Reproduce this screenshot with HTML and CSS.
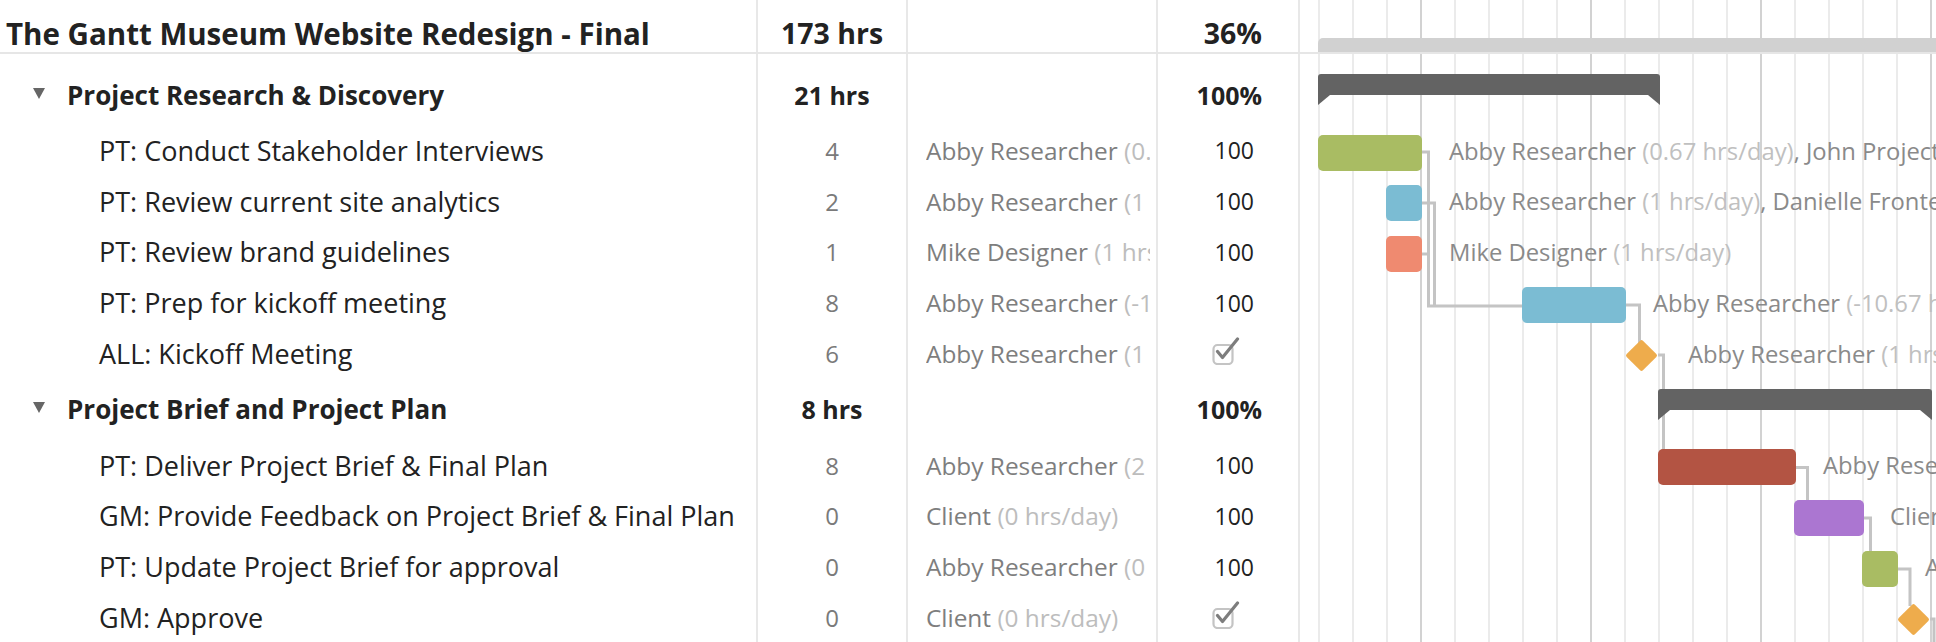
FILE: index.html
```html
<!DOCTYPE html>
<html>
<head>
<meta charset="utf-8">
<title>The Gantt Museum Website Redesign - Final</title>
<link rel="stylesheet" href="styles.css">
</head>
<body>
<div class="app">
  <div class="table">
    <div class="row head">
      <div class="c name"><span class="title">The Gantt Museum Website Redesign - Final</span></div>
      <div class="c hrs strong big">173 hrs</div>
      <div class="c asg"></div>
      <div class="c pct strong big">36%</div>
    </div>
    <div class="row spacer">
      <div class="c name"></div><div class="c hrs"></div><div class="c asg"></div><div class="c pct"></div>
    </div>
    <div class="row group">
      <div class="c name"><span class="caret"></span><span class="gname">Project Research &amp; Discovery</span></div>
      <div class="c hrs strong">21 hrs</div>
      <div class="c asg"></div>
      <div class="c pct strong">100%</div>
    </div>
    <div class="row task">
      <div class="c name"><span class="tname">PT: Conduct Stakeholder Interviews</span></div>
      <div class="c hrs">4</div>
      <div class="c asg"><span class="clip">Abby Researcher <span class="rate">(0.67 hrs/day), John Project Manager (0.67 hrs/day)</span></span></div>
      <div class="c pct">100</div>
    </div>
    <div class="row task">
      <div class="c name"><span class="tname">PT: Review current site analytics</span></div>
      <div class="c hrs">2</div>
      <div class="c asg"><span class="clip">Abby Researcher <span class="rate">(1 hrs/day), Danielle Frontend (1 hrs/day)</span></span></div>
      <div class="c pct">100</div>
    </div>
    <div class="row task">
      <div class="c name"><span class="tname">PT: Review brand guidelines</span></div>
      <div class="c hrs">1</div>
      <div class="c asg"><span class="clip">Mike Designer <span class="rate">(1 hrs/day)</span></span></div>
      <div class="c pct">100</div>
    </div>
    <div class="row task">
      <div class="c name"><span class="tname">PT: Prep for kickoff meeting</span></div>
      <div class="c hrs">8</div>
      <div class="c asg"><span class="clip">Abby Researcher <span class="rate">(-10.67 hrs/day)</span></span></div>
      <div class="c pct">100</div>
    </div>
    <div class="row task">
      <div class="c name"><span class="tname">ALL: Kickoff Meeting</span></div>
      <div class="c hrs">6</div>
      <div class="c asg"><span class="clip">Abby Researcher <span class="rate">(1 hrs/day)</span></span></div>
      <div class="c pct check">
        <svg class="cb" width="28" height="28" viewBox="0 0 28 28"><rect x="1.5" y="8" width="19" height="19" rx="4" fill="#fff" stroke="#c4c4c4" stroke-width="2.2"/><path d="M5.5 14.5 L10.5 20.5 L25.5 2" fill="none" stroke="#7d7d7d" stroke-width="3.2" stroke-linecap="round" stroke-linejoin="round"/></svg>
      </div>
    </div>
    <div class="row group">
      <div class="c name"><span class="caret"></span><span class="gname">Project Brief and Project Plan</span></div>
      <div class="c hrs strong">8 hrs</div>
      <div class="c asg"></div>
      <div class="c pct strong">100%</div>
    </div>
    <div class="row task">
      <div class="c name"><span class="tname">PT: Deliver Project Brief &amp; Final Plan</span></div>
      <div class="c hrs">8</div>
      <div class="c asg"><span class="clip">Abby Researcher <span class="rate">(2 hrs/day)</span></span></div>
      <div class="c pct">100</div>
    </div>
    <div class="row task">
      <div class="c name"><span class="tname">GM: Provide Feedback on Project Brief &amp; Final Plan</span></div>
      <div class="c hrs">0</div>
      <div class="c asg"><span class="clip">Client <span class="rate">(0 hrs/day)</span></span></div>
      <div class="c pct">100</div>
    </div>
    <div class="row task">
      <div class="c name"><span class="tname">PT: Update Project Brief for approval</span></div>
      <div class="c hrs">0</div>
      <div class="c asg"><span class="clip">Abby Researcher <span class="rate">(0 hrs/day)</span></span></div>
      <div class="c pct">100</div>
    </div>
    <div class="row task">
      <div class="c name"><span class="tname">GM: Approve</span></div>
      <div class="c hrs">0</div>
      <div class="c asg"><span class="clip">Client <span class="rate">(0 hrs/day)</span></span></div>
      <div class="c pct check">
        <svg class="cb" width="28" height="28" viewBox="0 0 28 28"><rect x="1.5" y="8" width="19" height="19" rx="4" fill="#fff" stroke="#c4c4c4" stroke-width="2.2"/><path d="M5.5 14.5 L10.5 20.5 L25.5 2" fill="none" stroke="#7d7d7d" stroke-width="3.2" stroke-linecap="round" stroke-linejoin="round"/></svg>
      </div>
    </div>
  </div>

  <div class="gantt">
    <svg class="links" width="636" height="650" viewBox="0 0 636 650">
      <g fill="none" stroke="#c4c4c4" stroke-width="3">
        <path d="M122 152 H128.5 V306 H222"/>
        <path d="M122 203 H134.5 V306"/>
        <path d="M122 254 H128.5"/>
        <path d="M326 305 H339.5 V345"/>
        <path d="M358 355 H363.5 V452"/>
        <path d="M496 467.5 H507.5 V502"/>
        <path d="M564 518 H570.5 V552"/>
        <path d="M598 569 H610 V606"/>
        <path d="M630 619 H634 V650"/>
      </g>
    </svg>
    <div class="g-row head"><div class="summary"></div></div>
    <div class="g-row spacer"></div>
    <div class="g-row group"><div class="gbar" style="left:18px;width:342px"></div></div>
    <div class="g-row task">
      <div class="bar green" style="left:18px;width:104px"></div>
      <div class="lbl" style="left:149px">Abby Researcher <span class="rate">(0.67 hrs/day)</span>, John Project Manager <span class="rate">(0.67 hrs/day)</span></div>
    </div>
    <div class="g-row task">
      <div class="bar blue" style="left:86px;width:36px"></div>
      <div class="lbl" style="left:149px">Abby Researcher <span class="rate">(1 hrs/day)</span>, Danielle Frontend <span class="rate">(1 hrs/day)</span></div>
    </div>
    <div class="g-row task">
      <div class="bar salmon" style="left:86px;width:36px"></div>
      <div class="lbl" style="left:149px">Mike Designer <span class="rate">(1 hrs/day)</span></div>
    </div>
    <div class="g-row task">
      <div class="bar blue" style="left:222px;width:104px"></div>
      <div class="lbl" style="left:353px">Abby Researcher <span class="rate">(-10.67 hrs/day)</span></div>
    </div>
    <div class="g-row task">
      <div class="diamond" style="left:329.5px"></div>
      <div class="lbl" style="left:388px">Abby Researcher <span class="rate">(1 hrs/day)</span></div>
    </div>
    <div class="g-row group"><div class="gbar" style="left:358px;width:274px"></div></div>
    <div class="g-row task">
      <div class="bar red" style="left:358px;width:138px"></div>
      <div class="lbl" style="left:523px">Abby Researcher <span class="rate">(2 hrs/day)</span></div>
    </div>
    <div class="g-row task">
      <div class="bar purple" style="left:494px;width:70px"></div>
      <div class="lbl" style="left:590px">Client <span class="rate">(0 hrs/day)</span></div>
    </div>
    <div class="g-row task">
      <div class="bar green" style="left:562px;width:36px"></div>
      <div class="lbl" style="left:625px">Abby Researcher <span class="rate">(0 hrs/day)</span></div>
    </div>
    <div class="g-row task">
      <div class="diamond" style="left:601.5px"></div>
      <div class="lbl" style="left:660px">Client <span class="rate">(0 hrs/day)</span></div>
    </div>
  </div>
</div>
</body>
</html>
```

FILE: styles.css
```css
* { box-sizing: border-box; }
html, body { margin: 0; padding: 0; }
body {
  width: 1936px;
  height: 642px;
  overflow: hidden;
  background: #fff;
  font-family: "Open Sans", Lato, "Liberation Sans", sans-serif;
  font-size: 25px;
  color: #222;
}
.app { display: flex; width: 1936px; height: 642px; }

/* ---------- table ---------- */
.table { width: 1300px; flex: none; }
.row { display: flex; }
.c {
  border-right: 2px solid #e8e8e8;
  display: flex;
  align-items: center;
  white-space: nowrap;
  overflow: hidden;
}
.c.name { width: 758px; padding-left: 99px; }
.c.hrs { width: 150px; justify-content: center; color: #7a7a7a; font-size: 24px; }
.c.asg { width: 250px; padding: 0 6px 0 18px; color: #7e7e7e; font-size: 24.4px; }
.c.pct { width: 142px; justify-content: flex-end; padding-right: 44px; font-size: 23px; }
.c.check { padding-right: 58px; }
.clip { display: block; width: 100%; overflow: hidden; white-space: nowrap; }
.rate { color: #bdbdbd; }
.tname { font-size: 27px; color: #222; }

.strong { font-weight: 700; color: #222 !important; font-size: 25px !important; }
.strong.big { font-size: 28.5px !important; }
.c.pct.strong { padding-right: 36px; }

.row.head { height: 54px; border-bottom: 2px solid #e6e6e6; }
.row.head .c { padding-top: 14px; }
.row.head .c.name { padding-left: 6px; }
.title { font-weight: 700; font-size: 29.5px; }

.row.spacer { height: 12px; }
.row.group { height: 61px; }
.row.group .c { padding-bottom: 4px; }
.row.group .c.name { padding-left: 33px; }
.gname { font-weight: 700; font-size: 26px; }
.caret {
  width: 0; height: 0;
  border-left: 6.5px solid transparent;
  border-right: 6.5px solid transparent;
  border-top: 11px solid #666;
  margin-right: 22px;
  margin-top: -3px;
}
.row.task { height: 50.75px; }
.row.task .c { padding-bottom: 4px; }
.row.task .c.asg { padding: 0 6px 4px 18px; }
.cb { display: block; margin-bottom: 4px; }

/* ---------- gantt ---------- */
.gantt {
  position: relative;
  flex: 1;
  height: 642px;
  overflow: hidden;
  background-color: #fff;
  background-image:
    linear-gradient(to right, transparent 0 102px, #d2d2d2 102px 104px, transparent 104px),
    linear-gradient(to right, #ebebeb 0 2px, transparent 2px);
  background-size: 170px 100%, 34px 100%;
  background-position: 18px 0, 18px 0;
  background-repeat: repeat-x;
}
.links { position: absolute; left: 0; top: 0; }
.g-row { position: relative; }
.g-row.head { height: 54px; border-bottom: 2px solid #e6e6e6; }
.g-row.spacer { height: 12px; }
.g-row.group { height: 61px; }
.g-row.task { height: 50.75px; }

.summary {
  position: absolute;
  left: 18px; right: -10px;
  top: 38px; height: 14px;
  background: #d1d1d1;
  border-radius: 5px 0 0 0;
}
.gbar {
  position: absolute;
  top: 8px; height: 21px;
  background: #636363;
  border-radius: 3px 3px 0 0;
}
.gbar::before, .gbar::after {
  content: "";
  position: absolute;
  top: 100%;
  width: 0; height: 0;
  border-top: 10px solid #636363;
}
.gbar::before { left: 0; border-right: 12px solid transparent; }
.gbar::after { right: 0; border-left: 12px solid transparent; }

.bar { position: absolute; top: 7.5px; height: 36px; border-radius: 5px; }
.green { background: #a9bc63; }
.blue { background: #7bbcd3; }
.salmon { background: #ef8a70; }
.red { background: #b35443; }
.purple { background: #ab76d1; }
.diamond {
  position: absolute;
  top: 50%;
  width: 23px; height: 23px;
  margin-top: -11.5px;
  background: #eeac4c;
  border-radius: 2px;
  transform: rotate(45deg);
}
.lbl {
  position: absolute;
  top: -1.5px;
  line-height: 50.75px;
  white-space: nowrap;
  color: #8a8a8a;
  font-size: 23.8px;
}
.lbl .rate { color: #c0c0c0; }
```
